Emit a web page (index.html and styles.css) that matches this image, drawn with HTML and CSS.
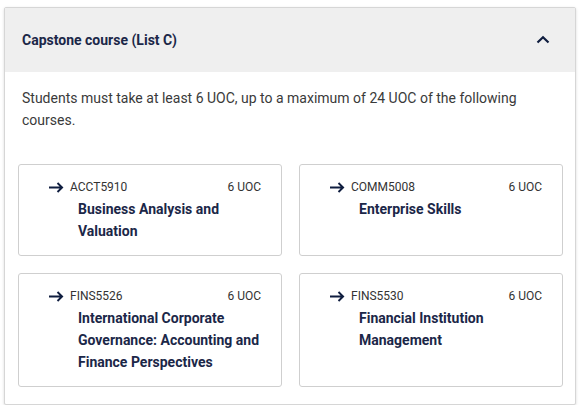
FILE: index.html
```html
<!DOCTYPE html>
<html lang="en">
<head>
    <meta charset="UTF-8">
    <meta name="viewport" content="width=device-width, initial-scale=1.0">
    <title>Capstone course (List C)</title>
    <link rel="stylesheet" href="styles.css">
</head>
<body>
    <div class="accordion">
        <div class="accordion-header">
            <h2>Capstone course (List C)</h2>
            <svg class="chevron" width="14" height="9" viewBox="0 0 14 9">
                <path d="M1.5 7.5L7 2.2l5.5 5.3" fill="none" stroke="#0f1d3f" stroke-width="2.2"/>
            </svg>
        </div>

        <div class="accordion-body">
            <p class="rule">Students must take at least 6 UOC, up to a maximum of 24 UOC of the following courses.</p>

            <div class="course-grid">
                <a class="course-card" href="#">
                    <svg class="arrow" width="15" height="11" viewBox="0 0 15 11">
                        <path d="M0 5.5h13M8.5 1l4.6 4.5L8.5 10" fill="none" stroke="#0f1d3f" stroke-width="1.9"/>
                    </svg>
                    <div class="course-info">
                        <div class="course-meta">
                            <span class="course-code">ACCT5910</span>
                            <span class="course-uoc">6 UOC</span>
                        </div>
                        <div class="course-name">Business Analysis and Valuation</div>
                    </div>
                </a>
                <a class="course-card" href="#">
                    <svg class="arrow" width="15" height="11" viewBox="0 0 15 11">
                        <path d="M0 5.5h13M8.5 1l4.6 4.5L8.5 10" fill="none" stroke="#0f1d3f" stroke-width="1.9"/>
                    </svg>
                    <div class="course-info">
                        <div class="course-meta">
                            <span class="course-code">COMM5008</span>
                            <span class="course-uoc">6 UOC</span>
                        </div>
                        <div class="course-name">Enterprise Skills</div>
                    </div>
                </a>
                <a class="course-card" href="#">
                    <svg class="arrow" width="15" height="11" viewBox="0 0 15 11">
                        <path d="M0 5.5h13M8.5 1l4.6 4.5L8.5 10" fill="none" stroke="#0f1d3f" stroke-width="1.9"/>
                    </svg>
                    <div class="course-info">
                        <div class="course-meta">
                            <span class="course-code">FINS5526</span>
                            <span class="course-uoc">6 UOC</span>
                        </div>
                        <div class="course-name">International Corporate Governance: Accounting and Finance Perspectives</div>
                    </div>
                </a>
                <a class="course-card" href="#">
                    <svg class="arrow" width="15" height="11" viewBox="0 0 15 11">
                        <path d="M0 5.5h13M8.5 1l4.6 4.5L8.5 10" fill="none" stroke="#0f1d3f" stroke-width="1.9"/>
                    </svg>
                    <div class="course-info">
                        <div class="course-meta">
                            <span class="course-code">FINS5530</span>
                            <span class="course-uoc">6 UOC</span>
                        </div>
                        <div class="course-name">Financial Institution Management</div>
                    </div>
                </a>
            </div>
        </div>
    </div>
</body>
</html>
```

FILE: styles.css
```css
* {
    margin: 0;
    padding: 0;
    box-sizing: border-box;
}

body {
    font-family: Roboto, 'Liberation Sans', Arial, sans-serif;
    background-color: #fff;
    color: #333;
}

.accordion {
    width: 572px;
    margin: 7px 0 0 4px;
    border: 1px solid #d6d6d6;
    border-radius: 2px;
    box-shadow: 0 1px 3px rgba(0,0,0,0.15);
    background: white;
}

.accordion-header {
    display: flex;
    align-items: center;
    justify-content: space-between;
    height: 64px;
    padding: 0 25px 1px 17px;
    background: #efefef;
}

.accordion-header h2 {
    font-size: 14px;
    font-weight: 700;
    color: #1b2748;
}

.accordion-body {
    padding: 15px 12px 17px 13px;
}

.rule {
    padding: 0 4px;
    font-size: 14px;
    line-height: 22px;
    color: #3a3a3a;
    margin-bottom: 33px;
}

.course-grid {
    display: grid;
    grid-template-columns: 1fr 1fr;
    gap: 17px;
}

.course-card {
    display: flex;
    align-items: flex-start;
    padding: 11px 20px 13px 30px;
    border: 1px solid #cfcfcf;
    border-radius: 3px;
    text-decoration: none;
    color: inherit;
}

.arrow {
    flex-shrink: 0;
    margin: 6px 6px 0 0;
}

.course-info {
    flex: 1;
    min-width: 0;
}

.course-meta {
    display: flex;
    justify-content: space-between;
    font-size: 12px;
    line-height: 22px;
    color: #333;
}

.course-name {
    padding-left: 8px;
    font-size: 14px;
    font-weight: 700;
    line-height: 22px;
    color: #1b2748;
}
```
